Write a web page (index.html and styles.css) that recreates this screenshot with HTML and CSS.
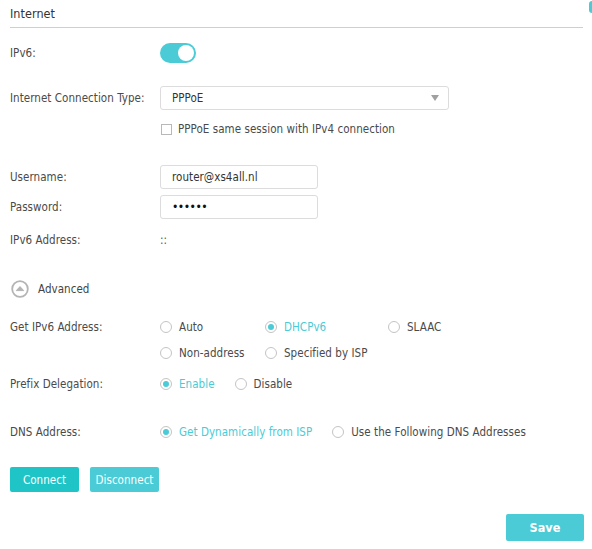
FILE: index.html
```html
<!DOCTYPE html>
<html>
<head>
<meta charset="utf-8">
<link rel="stylesheet" href="styles.css">
</head>
<body>
<div class="page">
  <span class="edge-tab"></span>
  <div class="header">Internet</div>

  <div class="row r-ipv6">
    <div class="label">IPv6:</div>
    <div class="toggle"><span class="knob"></span></div>
  </div>

  <div class="row r-conn">
    <div class="label">Internet Connection Type:</div>
    <div class="select"><span>PPPoE</span><span class="arrow"></span></div>
  </div>

  <div class="row r-check">
    <div class="label"></div>
    <div class="check"><span class="box"></span><span>PPPoE same session with IPv4 connection</span></div>
  </div>

  <div class="row r-user">
    <div class="label">Username:</div>
    <div class="input">router@xs4all.nl</div>
  </div>

  <div class="row r-pass">
    <div class="label">Password:</div>
    <div class="input pw">&#8226;&#8226;&#8226;&#8226;&#8226;&#8226;</div>
  </div>

  <div class="row r-addr">
    <div class="label">IPv6 Address:</div>
    <div class="value">::</div>
  </div>

  <div class="row r-adv">
    <svg class="adv-icon" width="18" height="18" viewBox="0 0 18 18">
      <circle cx="9" cy="9" r="7.8" fill="none" stroke="#b4b4b4" stroke-width="1.8"/>
      <path d="M5.3 10.6 L9 6.6 L12.7 10.6 Z" fill="#b4b4b4" stroke="#b4b4b4" stroke-width="1" stroke-linejoin="round"/>
    </svg>
    <span class="adv-text">Advanced</span>
  </div>

  <div class="row r-get">
    <div class="label">Get IPv6 Address:</div>
    <div class="radio-grid">
      <div class="radio"><span class="dot"></span><span>Auto</span></div>
      <div class="radio on"><span class="dot"></span><span>DHCPv6</span></div>
      <div class="radio"><span class="dot"></span><span>SLAAC</span></div>
    </div>
  </div>
  <div class="row r-get2">
    <div class="label"></div>
    <div class="radio-grid">
      <div class="radio"><span class="dot"></span><span>Non-address</span></div>
      <div class="radio"><span class="dot"></span><span>Specified by ISP</span></div>
    </div>
  </div>

  <div class="row r-prefix">
    <div class="label">Prefix Delegation:</div>
    <div class="radio-line">
      <div class="radio on"><span class="dot"></span><span>Enable</span></div>
      <div class="radio"><span class="dot"></span><span>Disable</span></div>
    </div>
  </div>

  <div class="row r-dns">
    <div class="label">DNS Address:</div>
    <div class="radio-line">
      <div class="radio on"><span class="dot"></span><span>Get Dynamically from ISP</span></div>
      <div class="radio"><span class="dot"></span><span>Use the Following DNS Addresses</span></div>
    </div>
  </div>

  <div class="buttons">
    <button class="btn connect">Connect</button>
    <button class="btn disconnect">Disconnect</button>
  </div>

  <div class="save-row">
    <button class="btn save">Save</button>
  </div>
</div>
</body>
</html>
```

FILE: styles.css
```css
html, body {
  margin: 0;
  padding: 0;
  background: #fff;
}
body {
  font-family: "DejaVu Sans Condensed", "DejaVu Sans", sans-serif;
  font-stretch: condensed;
  font-size: 11.5px;
  letter-spacing: 0.05px;
  color: #4a4a4a;
}
.page {
  position: relative;
  width: 592px;
  height: 549px;
  padding-left: 10px;
  box-sizing: border-box;
}
.edge-tab {
  position: absolute;
  right: -3px;
  top: 1px;
  width: 6px;
  height: 12px;
  border-radius: 3px;
  background: #4acbd6;
}
.header {
  width: 573px;
  height: 27px;
  line-height: 28px;
  font-size: 12.5px;
  color: #333;
  border-bottom: 1px solid #cfcfcf;
}
.row {
  display: flex;
  align-items: center;
}
.label {
  width: 150px;
  flex: none;
}
.r-ipv6 { margin-top: 15px; height: 20px; }
.r-conn { margin-top: 23px; height: 24px; }
.r-check { margin-top: 12px; height: 14px; }
.r-user { margin-top: 29px; height: 24px; }
.r-pass { margin-top: 6px; height: 24px; }
.r-addr { margin-top: 13px; height: 16px; }
.r-adv { margin-top: 32px; height: 18px; padding-left: 1px; }
.r-get { margin-top: 21px; height: 16px; }
.r-get2 { margin-top: 10px; height: 16px; }
.r-prefix { margin-top: 15px; height: 16px; }
.r-dns { margin-top: 32px; height: 16px; }

.toggle {
  width: 36px;
  height: 20px;
  border-radius: 10px;
  background: #4acbd6;
  display: flex;
  align-items: center;
  justify-content: flex-end;
  padding-right: 2px;
  box-sizing: border-box;
}
.knob {
  width: 16px;
  height: 16px;
  border-radius: 50%;
  background: #fff;
}
.select {
  width: 289px;
  height: 24px;
  box-sizing: border-box;
  border: 1px solid #dcdcdc;
  border-radius: 3px;
  display: flex;
  align-items: center;
  justify-content: space-between;
  padding: 0 9px 0 11px;
  color: #333;
}
.arrow {
  width: 0;
  height: 0;
  border-left: 4.5px solid transparent;
  border-right: 4.5px solid transparent;
  border-top: 6px solid #a0a0a0;
}
.check {
  display: flex;
  align-items: center;
  gap: 6px;
  padding-left: 1px;
}
.box {
  width: 11px;
  height: 11px;
  box-sizing: border-box;
  border: 1px solid #b8b8b8;
  background: #fff;
}
.input {
  width: 158px;
  height: 24px;
  box-sizing: border-box;
  border: 1px solid #dcdcdc;
  border-radius: 3px;
  padding-left: 11px;
  display: flex;
  align-items: center;
  color: #333;
}
.input.pw {
  font-size: 12px;
  letter-spacing: -0.5px;
  color: #111;
}
.value { color: #555; }
.adv-icon { flex: none; }
.adv-text { margin-left: 9px; color: #444; }

.radio-grid {
  display: grid;
  grid-template-columns: 105px 123px auto;
}
.radio-line {
  display: flex;
  gap: 20px;
}
.radio {
  display: flex;
  align-items: center;
  gap: 7px;
  white-space: nowrap;
}
.dot {
  width: 12px;
  height: 12px;
  box-sizing: border-box;
  border: 1px solid #c4c4c4;
  border-radius: 50%;
  background: #fff;
  display: flex;
  align-items: center;
  justify-content: center;
  flex: none;
}
.radio.on { color: #4acbd6; }
.radio.on .dot::after {
  content: "";
  width: 6px;
  height: 6px;
  border-radius: 50%;
  background: #4acbd6;
}

.buttons {
  margin-top: 27px;
  display: flex;
  gap: 11px;
}
.btn {
  font-family: inherit;
  font-stretch: condensed;
  font-size: 11.5px;
  font-weight: normal;
  letter-spacing: 0.05px;
  color: #fff;
  border: none;
  border-radius: 2px;
  padding: 0;
  height: 25px;
  width: 69px;
}
.connect { background: #1fc5c6; }
.disconnect { background: #4acbd6; }
.save-row {
  margin-top: 22px;
  display: flex;
  justify-content: flex-end;
  padding-right: 8px;
}
.save {
  width: 78px;
  height: 27px;
  font-size: 12.5px;
  font-weight: bold;
  background: #4acbd6;
}
```
